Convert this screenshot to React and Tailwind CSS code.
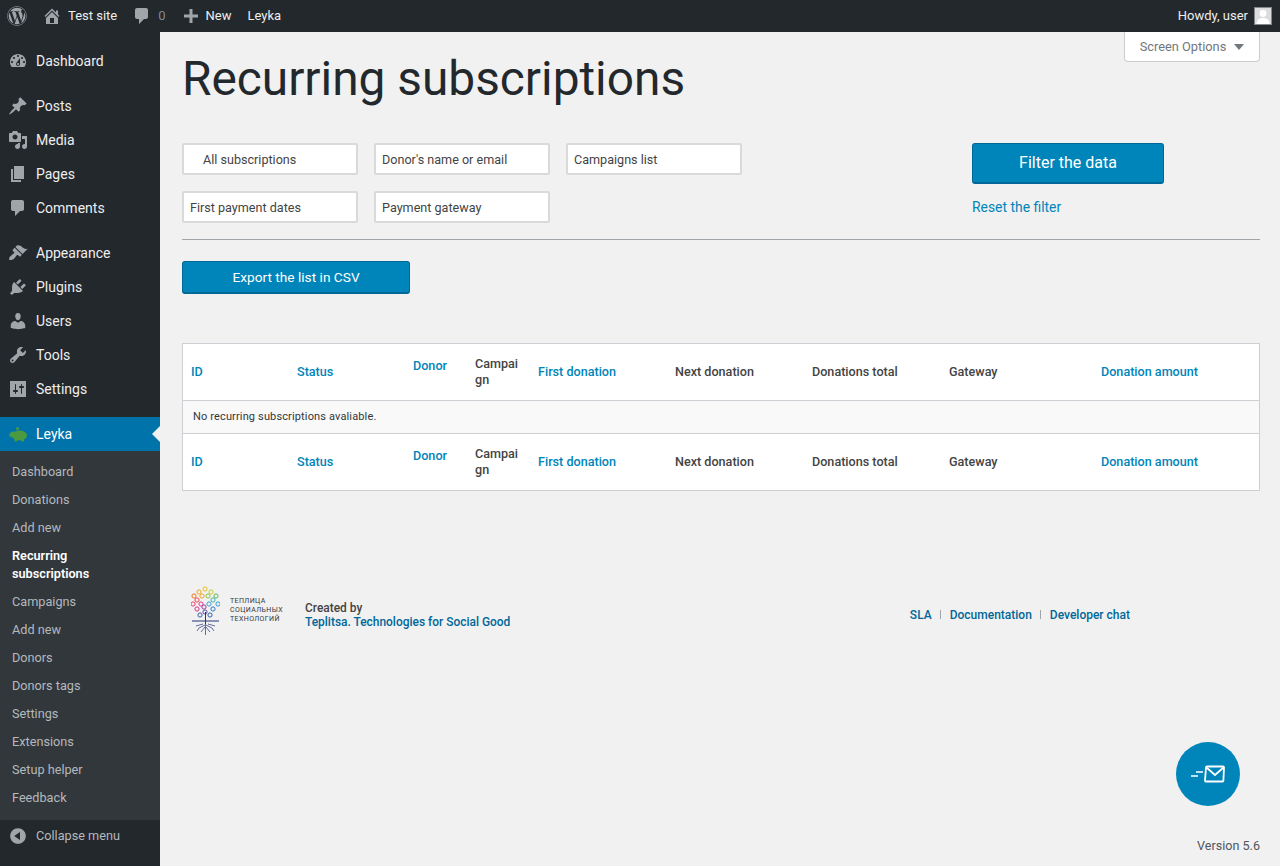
import React from 'react';
import {FaWordpress} from 'react-icons/fa';

const icons = {
    dashboard: 'M3.76 16h12.48c1.1-1.37 1.76-3.11 1.76-5 0-4.42-3.58-8-8-8s-8 3.58-8 8c0 1.89.66 3.63 1.76 5zM10 4c.55 0 1 .45 1 1s-.45 1-1 1-1-.45-1-1 .45-1 1-1zM6 6c.55 0 1 .45 1 1s-.45 1-1 1-1-.45-1-1 .45-1 1-1zm8 0c.55 0 1 .45 1 1s-.45 1-1 1-1-.45-1-1 .45-1 1-1zm-5.37 5.55L12 7v6c0 1.1-.9 2-2 2s-2-.9-2-2c0-.57.24-1.08.63-1.45zM4 10c.55 0 1 .45 1 1s-.45 1-1 1-1-.45-1-1 .45-1 1-1zm12 0c.55 0 1 .45 1 1s-.45 1-1 1-1-.45-1-1 .45-1 1-1zm-5 3c0-.55-.45-1-1-1s-1 .45-1 1 .45 1 1 1 1-.45 1-1z',
    post: 'M10.44 3.02l1.82-1.82 6.36 6.35-1.83 1.82c-1.05-.68-2.48-.57-3.41.36l-.75.75c-.92.93-1.04 2.35-.35 3.41l-1.83 1.82-2.41-2.41-2.8 2.79c-.42.42-3.38 2.71-3.8 2.29s1.86-3.39 2.28-3.81l2.79-2.79L4.1 9.36l1.83-1.82c1.05.69 2.48.57 3.4-.36l.75-.75c.93-.92 1.05-2.35.36-3.41z',
    media: 'M13 11V4c0-.55-.45-1-1-1h-1.67L9 1H5L3.67 3H2c-.55 0-1 .45-1 1v7c0 .55.45 1 1 1h10c.55 0 1-.45 1-1zM7 4.5c1.38 0 2.5 1.12 2.5 2.5S8.38 9.5 7 9.5 4.5 8.38 4.5 7 5.62 4.5 7 4.5zM14 6h5v10.5c0 1.38-1.12 2.5-2.5 2.5S14 17.88 14 16.5s1.12-2.5 2.5-2.5c.17 0 .34.02.5.05V9h-3V6zm-4 8.05V13h2v3.5c0 1.38-1.12 2.5-2.5 2.5S7 17.88 7 16.5 8.12 14 9.5 14c.17 0 .34.02.5.05z',
    page: 'M6 15V2h10v13H6zm-1 1h8v2H3V5h2v11z',
    comment: 'M5 2h9c1.1 0 2 .9 2 2v7c0 1.1-.9 2-2 2h-2l-5 5v-5H5c-1.1 0-2-.9-2-2V4c0-1.1.9-2 2-2z',
    appearance: 'M14.48 11.06L7.41 3.99l1.5-1.5c.5-.56 2.3-.47 3.51.32 1.21.8 1.43 1.28 2.91 2.1 1.18.64 2.45 1.26 4.45.85zm-.71.71L6.7 4.7 4.93 6.47c-.39.39-.39 1.02 0 1.41l1.06 1.06c.39.39.39 1.03 0 1.42-.6.6-1.43 1.11-2.21 1.69-.35.26-.7.53-1.01.84C1.43 13.23.91 15.78 1.2 16.8c.01.04.03.07.05.1.03.03.06.05.1.05 1.02.3 3.57-.22 4.9-1.55.3-.31.58-.66.84-1.01.58-.78 1.09-1.61 1.69-2.21.39-.39 1.02-.39 1.41 0l1.06 1.06c.39.39 1.02.39 1.41 0z',
    plugin: 'M13.11 4.36L9.87 7.6 8 5.73l3.24-3.24c.35-.34 1.05-.2 1.56.32.52.51.66 1.21.31 1.55zm-8 1.77l.91-1.12 9.01 9.01-1.19.84c-.71.71-2.63 1.16-3.82 1.16H6.14L4.9 17.26c-.59.59-1.54.59-2.12 0-.59-.58-.59-1.53 0-2.12l1.24-1.24v-3.88c0-1.13.4-3.19 1.09-3.89zm7.26 3.97l3.24-3.24c.34-.35 1.04-.21 1.55.31.52.51.66 1.21.31 1.55l-3.24 3.25z',
    users: 'M10 9.25c-2.27 0-2.73-3.44-2.73-3.44C7 4.02 7.82 2 9.97 2c2.16 0 2.98 2.02 2.71 3.81 0 0-.41 3.44-2.68 3.44zm0 2.57L12.72 10c2.39 0 4.52 2.33 4.52 4.53v2.49s-3.65 1.13-7.24 1.13c-3.65 0-7.24-1.13-7.24-1.13v-2.49c0-2.25 1.94-4.48 4.47-4.48z',
    tools: 'M16.68 9.77c-1.34 1.34-3.3 1.67-4.95.99l-5.41 6.52c-.99.99-2.59.99-3.58 0s-.99-2.59 0-3.57l6.52-5.42c-.68-1.65-.35-3.61.99-4.95 1.28-1.28 3.12-1.62 4.72-1.06l-2.89 2.89 2.82 2.82 2.86-2.87c.53 1.58.18 3.39-1.08 4.65zM3.81 16.21c.4.39 1.04.39 1.43 0 .4-.4.4-1.04 0-1.43-.39-.4-1.03-.4-1.43 0-.39.39-.39 1.03 0 1.43z',
    settings: 'M18 16V2H2v16h16zM8 11h1c.55 0 1 .45 1 1s-.45 1-1 1H8v1.5c0 .28-.22.5-.5.5s-.5-.22-.5-.5V13H6c-.55 0-1-.45-1-1s.45-1 1-1h1V5.5c0-.28.22-.5.5-.5s.5.22.5.5V11zm5-2h-1c-.55 0-1-.45-1-1s.45-1 1-1h1V5.5c0-.28.22-.5.5-.5s.5.22.5.5V7h1c.55 0 1 .45 1 1s-.45 1-1 1h-1v5.5c0 .28-.22.5-.5.5s-.5-.22-.5-.5V9z',
    home: 'M16 8.5l1.53 1.53-1.06 1.06L10 4.62l-6.47 6.47-1.06-1.06L10 2.5l4 4v-2h2v4zm-6-2.46l6 5.99V18H4v-5.97zM12 17v-5H8v5h4z',
    plus: 'M17 8.5v3h-5.5V17h-3v-5.5H3v-3h5.5V3h3v5.5z',
    collapse: 'M10 2.16c4.33 0 7.84 3.51 7.84 7.84s-3.51 7.84-7.84 7.84S2.16 14.33 2.16 10 5.71 2.16 10 2.16zm2 11.72V6.12L6.18 9.97z',
};

function Dashicon({name, className}) {
    return (
        <svg viewBox="0 0 20 20" className={className} fill="currentColor" fillRule="evenodd" clipRule="evenodd">
            <path d={icons[name]}/>
        </svg>
    );
}

function LeykaIcon() {
    return (
        <svg viewBox="0 0 18 15" className="w-[18px] h-[15px]" fill="#4c9a3f">
            <ellipse cx="10.5" cy="8.5" rx="7.5" ry="5"/>
            <circle cx="4" cy="7.5" r="3"/>
            <circle cx="8.5" cy="1.6" r="1.5"/>
            <rect x="5.5" y="11" width="2.5" height="3.5"/>
            <rect x="12.5" y="11" width="2.5" height="3.5"/>
            <path d="M1 6.5C0 7.5.2 9.5 1.5 10" fill="none" stroke="#4c9a3f"/>
        </svg>
    );
}

function TeplitsaTree() {
    const rings = [
        [14, 3, '#e8c11c'], [8, 6, '#f0a51e'], [20, 6, '#c5cf2e'], [3, 10, '#f0741e'], [11, 10, '#f0a51e'],
        [17, 10, '#8cc63f'], [25, 10, '#5cb85c'], [6, 14, '#ee4c4c'], [22, 14, '#3bb6a5'], [2, 18, '#ec3c6c'],
        [10, 18, '#e33c8c'], [18, 18, '#3aa0d8'], [27, 18, '#2f9fd0'], [6, 23, '#d8338c'], [13, 21, '#a03c9c'],
        [22, 23, '#2f78c0'], [9, 29, '#3c5ea8'], [14, 26, '#5a4ca8'], [19, 29, '#2f5ea8'],
    ];
    return (
        <svg viewBox="0 0 29 50" className="w-[29px] h-[50px] shrink-0">
            {rings.map(([cx, cy, color]) => (
                <circle key={`${cx}-${cy}`} cx={cx} cy={cy} r="2.1" fill="none" stroke={color} strokeWidth="1"/>
            ))}
            <path d="M14.5 26v12M1 35h27" stroke="#26337a" strokeWidth="1" fill="none"/>
            <path d="M14.5 37v12M14 39l-6 3-2 3M15 39l6 3 2 3M14 41l-4 5M15 41l4 5M12 38l-7 2M17 38l7 2" stroke="#26337a" strokeWidth=".7" fill="none"/>
        </svg>
    );
}

function MenuItem({icon, label}) {
    return (
        <a className="flex items-center h-[34px] text-[14px] text-[#eeeeee]" href="#">
            <span className="w-[36px] flex justify-center pr-[1px]">
                <Dashicon name={icon} className="w-[20px] h-[20px] text-[#a0a5aa]"/>
            </span>
            {label}
        </a>
    );
}

function SubItem({label, active}) {
    return (
        <a className={`block px-[12px] py-[5px] text-[12.7px] leading-[18px] ${active ? 'font-semibold text-white' : 'text-[#b4b9be]'}`} href="#">
            {label}
        </a>
    );
}

function Sidebar() {
    return (
        <aside className="w-[160px] shrink-0 bg-[#23282d] flex flex-col">
            <nav className="pt-[12px] pb-[11px] flex flex-col">
                <MenuItem icon="dashboard" label="Dashboard"/>
            </nav>
            <nav className="pb-[11px] flex flex-col">
                <MenuItem icon="post" label="Posts"/>
                <MenuItem icon="media" label="Media"/>
                <MenuItem icon="page" label="Pages"/>
                <MenuItem icon="comment" label="Comments"/>
            </nav>
            <nav className="pb-[11px] flex flex-col">
                <MenuItem icon="appearance" label="Appearance"/>
                <MenuItem icon="plugin" label="Plugins"/>
                <MenuItem icon="users" label="Users"/>
                <MenuItem icon="tools" label="Tools"/>
                <MenuItem icon="settings" label="Settings"/>
            </nav>
            <a className="relative flex items-center h-[34px] bg-[#0073aa] text-white text-[14px]" href="#">
                <span className="w-[36px] flex justify-center pr-[1px]"><LeykaIcon/></span>
                Leyka
                <span className="absolute right-0 top-[9px] border-y-[8px] border-r-[8px] border-y-transparent border-r-[#f1f1f1]"></span>
            </a>
            <div className="bg-[#32373c] pt-[7px] pb-[8px]">
                <SubItem label="Dashboard"/>
                <SubItem label="Donations"/>
                <SubItem label="Add new"/>
                <SubItem label={<>Recurring<br/>subscriptions</>} active/>
                <SubItem label="Campaigns"/>
                <SubItem label="Add new"/>
                <SubItem label="Donors"/>
                <SubItem label="Donors tags"/>
                <SubItem label="Settings"/>
                <SubItem label="Extensions"/>
                <SubItem label="Setup helper"/>
                <SubItem label="Feedback"/>
            </div>
            <a className="flex items-center h-[32px] text-[12.7px] text-[#b4b9be]" href="#">
                <span className="w-[36px] flex justify-center pr-[1px]">
                    <Dashicon name="collapse" className="w-[20px] h-[20px] text-[#a0a5aa]"/>
                </span>
                Collapse menu
            </a>
        </aside>
    );
}

function TopBar() {
    return (
        <header className="h-[32px] shrink-0 bg-[#23282d] flex items-center text-[13px] text-[#eeeeee]">
            <FaWordpress className="w-[20px] h-[20px] ml-[7px] text-[#a0a5aa]"/>
            <Dashicon name="home" className="w-[20px] h-[20px] ml-[15px] text-[#a0a5aa]"/>
            <span className="ml-[6px]">Test site</span>
            <Dashicon name="comment" className="w-[20px] h-[20px] ml-[15px] text-[#a0a5aa]"/>
            <span className="ml-[6px] text-[#7e8993]">0</span>
            <Dashicon name="plus" className="w-[20px] h-[20px] ml-[15px] text-[#a0a5aa]"/>
            <span className="ml-[5px]">New</span>
            <span className="ml-[16px]">Leyka</span>
            <span className="ml-auto">Howdy, user</span>
            <span className="ml-[6px] mr-[8px] w-[18px] h-[18px] border border-[#82878c] bg-[#dcdcde] overflow-hidden">
                <svg viewBox="0 0 16 16" className="w-full h-full" fill="#ffffff">
                    <circle cx="8" cy="5.5" r="3.4"/>
                    <path d="M1.5 16c0-4 2.6-6 6.5-6s6.5 2 6.5 6z"/>
                </svg>
            </span>
        </header>
    );
}

const columns = [
    {label: 'ID', w: 'w-[106px]', link: true},
    {label: 'Status', w: 'w-[116px]', link: true},
    {label: 'Donor', w: 'w-[62px]', link: true, top: true},
    {label: 'Campaign', w: 'w-[63px]'},
    {label: 'First donation', w: 'w-[137px]', link: true},
    {label: 'Next donation', w: 'w-[137px]'},
    {label: 'Donations total', w: 'w-[137px]'},
    {label: 'Gateway', w: 'w-[152px]'},
    {label: 'Donation amount', w: 'w-[166px]', link: true},
];

function HeadRow({foot}) {
    return (
        <tr className={foot ? 'h-[57px]' : 'h-[56px]'}>
            {columns.map((col) => (
                <th
                    key={col.label}
                    className={`${col.w} px-[8px] text-left font-medium text-[12.6px] leading-[16px] break-all ${col.top ? 'align-top pt-[14px]' : foot ? 'align-middle pt-[1px]' : 'align-middle'} ${col.link ? 'text-[#0085ba]' : 'text-[#444444]'}`}
                >
                    {col.label}
                </th>
            ))}
        </tr>
    );
}

function FilterBox({children, className = 'pl-[6px]'}) {
    return (
        <div className={`w-[176px] h-[32px] pt-[2px] bg-white border-2 border-[#dadada] rounded-[2px] flex items-center text-[12.6px] text-[#444444] ${className}`}>
            {children}
        </div>
    );
}

export default function App() {
    return (
        <div className="h-[866px] overflow-hidden flex flex-col bg-[#f1f1f1] font-['Roboto',sans-serif]">
            <TopBar/>
            <div className="flex flex-1 min-h-0">
                <Sidebar/>
                <main className="relative flex-1 pl-[22px] pr-[20px]">
                    <button className="absolute top-0 right-[20px] w-[136px] h-[30px] bg-white border border-[#cccccc] border-t-0 rounded-b-[4px] flex items-center justify-center gap-[8px] text-[12.8px] text-[#72777c]">
                        Screen Options
                        <span className="border-x-[5px] border-t-[6px] border-x-transparent border-t-[#72777c]"></span>
                    </button>

                    <h1 className="pt-[19px] text-[47.8px] leading-[56px] font-normal text-[#23282d]">Recurring subscriptions</h1>

                    <section className="mt-[36px] flex h-[96px] border-b border-[#a0a5aa] box-content">
                        <div className="w-[790px] shrink-0">
                            <div className="flex flex-wrap gap-[16px] w-[560px]">
                                <FilterBox className="pl-[19px]">All subscriptions</FilterBox>
                                <FilterBox>Donor's name or email</FilterBox>
                                <FilterBox>Campaigns list</FilterBox>
                                <FilterBox>First payment dates</FilterBox>
                                <FilterBox>Payment gateway</FilterBox>
                            </div>
                        </div>
                        <div>
                            <button className="w-[192px] h-[41px] bg-[#0085ba] border border-[#006799] border-b-2 rounded-[3px] text-white text-[16px]">Filter the data</button>
                            <a className="block mt-[14px] text-[13.9px] leading-[18px] text-[#0085ba]" href="#">Reset the filter</a>
                        </div>
                    </section>

                    <button className="mt-[21px] block w-[228px] h-[33px] bg-[#0085ba] border border-[#006799] border-b-2 rounded-[3px] text-white text-[13.7px]">Export the list in CSV</button>

                    <div className="mt-[49px] bg-white border border-[#ccd0d4]">
                        <table className="w-full table-fixed border-collapse">
                            <thead className="border-b border-[#ccd0d4]"><HeadRow/></thead>
                            <tbody className="border-b border-[#ccd0d4]">
                                <tr className="h-[33px] bg-[#f9f9f9]">
                                    <td colSpan={9} className="px-[10px] pt-[1px] text-[11px] tracking-[0.14px] text-[#32373c]">No recurring subscriptions avaliable.</td>
                                </tr>
                            </tbody>
                            <tfoot><HeadRow foot/></tfoot>
                        </table>
                    </div>

                    <footer className="mt-[98px] flex items-center pl-[9px] h-[51px]">
                        <div className="w-[114px] mb-[8px] flex items-center gap-[10px] shrink-0">
                            <TeplitsaTree/>
                            <div className="text-[7px] leading-[9px] tracking-[0.4px] text-[#32373c] whitespace-nowrap">
                                ТЕПЛИЦА<br/>СОЦИАЛЬНЫХ<br/>ТЕХНОЛОГИЙ
                            </div>
                        </div>
                        <div className="text-[11.95px] leading-[14px] font-medium text-[#444444]">
                            Created by<br/>
                            <a className="text-[#006799]" href="#">Teplitsa. Technologies for Social Good</a>
                        </div>
                        <div className="ml-auto mr-[130px] flex items-center gap-[8.5px] text-[12px] leading-[14px] font-medium text-[#006799]">
                            <a href="#">SLA</a>
                            <span className="w-px h-[9px] bg-[#a0a5aa]"></span>
                            <a href="#">Documentation</a>
                            <span className="w-px h-[9px] bg-[#a0a5aa]"></span>
                            <a href="#">Developer chat</a>
                        </div>
                    </footer>

                    <button className="absolute right-[40px] bottom-[60px] w-[64px] h-[64px] rounded-full bg-[#0085ba] flex items-center justify-center" aria-label="Feedback">
                        <svg viewBox="0 0 36 20" className="w-[36px] h-[20px]" fill="none" stroke="#ffffff">
                            <path d="M6 8h7M1 12h7" strokeWidth="1.5"/>
                            <path d="M16 3.5c0-.5.4-1 1-1h16c.6 0 1 .5 1 1l-.6 13c0 .5-.5 1-1 1H16c-.6 0-1-.5-1-1z" strokeWidth="1.8"/>
                            <path d="M16.5 3.5L25 11l8.5-7.5" strokeWidth="1.8"/>
                        </svg>
                    </button>

                    <span className="absolute right-[20px] bottom-[10px] text-[12.6px] text-[#50575e]">Version 5.6</span>
                </main>
            </div>
        </div>
    );
}
